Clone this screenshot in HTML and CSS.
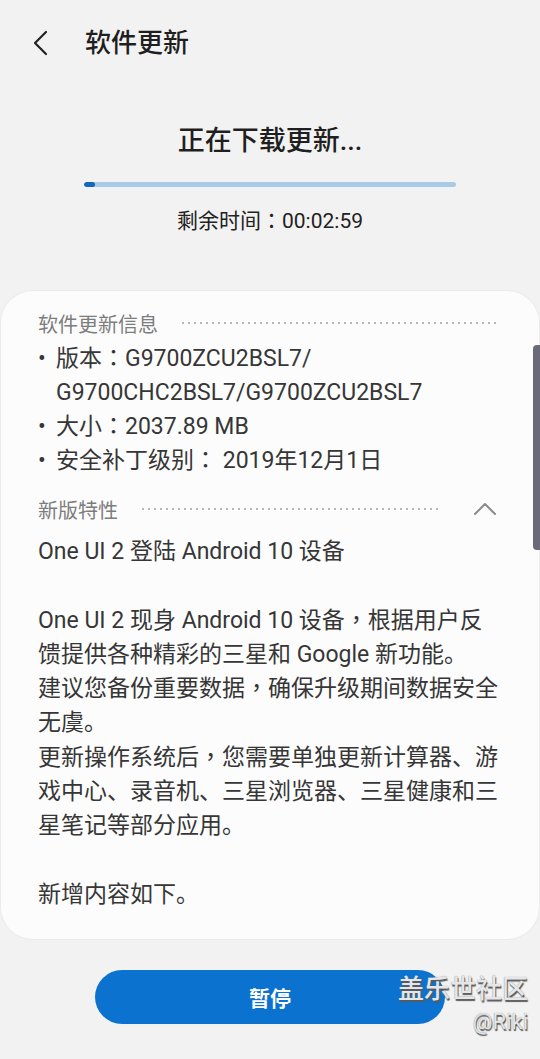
FILE: index.html
```html
<!DOCTYPE html>
<html lang="zh-CN">

<head>
    <meta charset="UTF-8">
    <meta name="viewport" content="width=device-width, initial-scale=1.0">
    <title>软件更新</title>
    <link rel="stylesheet" href="styles.css">
</head>

<body>
    <header class="topbar">
        <svg class="back" width="20" height="28" viewBox="0 0 20 28">
            <polyline points="14,3 3,14 14,25" fill="none" stroke="#222" stroke-width="2.2" stroke-linecap="round" stroke-linejoin="round"/>
        </svg>
        <h1 class="title">软件更新</h1>
    </header>

    <section class="status">
        <h2 class="status-title">正在下载更新...</h2>
        <div class="progress"><div class="progress-fill" style="width: 3%;"></div></div>
        <div class="remaining">剩余时间<span class="fw">：</span>00:02:59</div>
    </section>

    <main class="card">
        <div class="section-head">
            <span class="section-label">软件更新信息</span>
            <span class="dots"></span>
        </div>
        <ul class="info">
            <li><span class="bullet">•</span><span>版本<span class="fw">：</span>G9700ZCU2BSL7/<br>G9700CHC2BSL7/G9700ZCU2BSL7</span></li>
            <li><span class="bullet">•</span><span>大小<span class="fw">：</span>2037.89 MB</span></li>
            <li><span class="bullet">•</span><span>安全补丁级别<span class="fw">：</span> 2019年12月1日</span></li>
        </ul>

        <div class="section-head features">
            <span class="section-label">新版特性</span>
            <span class="dots"></span>
            <svg class="chevron" width="22" height="14" viewBox="0 0 22 14">
                <polyline points="1,12 11,2 21,12" fill="none" stroke="#8a8a8a" stroke-width="2" stroke-linecap="round" stroke-linejoin="round"/>
            </svg>
        </div>

        <p class="notes">One UI 2 登陆 Android 10 设备<br>
            <br>
            One UI 2 现身 Android 10 设备<span class="fw">，</span>根据用户反<br>
            馈提供各种精彩的三星和 Google 新功能。<br>
            建议您备份重要数据<span class="fw">，</span>确保升级期间数据安全<br>
            无虞。<br>
            更新操作系统后<span class="fw">，</span>您需要单独更新计算器、游<br>
            戏中心、录音机、三星浏览器、三星健康和三<br>
            星笔记等部分应用。<br>
            <br>
            新增内容如下。</p>
    </main>

    <div class="actions">
        <button class="pause">暂停</button>
    </div>

    <div class="scrollbar"></div>
    <div class="watermark">
        <div class="wm-name">盖乐世社区</div>
        <div class="wm-user">@Riki</div>
    </div>
</body>

</html>
```

FILE: styles.css
```css
body {
    margin: 0;
    padding: 0;
    background-color: #f2f2f2;
    color: #222;
    font-family: Roboto, "Noto Sans CJK SC", sans-serif;
    position: relative;
    min-height: 1059px;
}

/* centred full-width punctuation, as on the device */
.fw {
    font-family: "Noto Sans CJK TC", "Noto Sans CJK SC", sans-serif;
    font-feature-settings: "locl" 0;
    line-height: 0;
}

.topbar {
    height: 86px;
    display: flex;
    align-items: center;
    padding-left: 32px;
    box-sizing: border-box;
}

.back {
    display: block;
}

.title {
    margin: 0 0 0 33px;
    font-size: 26px;
    font-weight: 500;
    line-height: 36px;
    color: #1f1f1f;
}

.status {
    text-align: center;
}

.status-title {
    margin: 37px 0 0;
    font-size: 27px;
    font-weight: 500;
    line-height: 36px;
    color: #1f1f1f;
}

.progress {
    width: 372px;
    height: 5px;
    margin: 23px auto 0;
    background-color: #a9cae4;
    border-radius: 3px;
    overflow: hidden;
}

.progress-fill {
    height: 100%;
    background-color: #1467ba;
    border-radius: 3px;
}

.remaining {
    margin-top: 20px;
    font-size: 21px;
    line-height: 28px;
    color: #222;
}

.card {
    margin: 56px 1px 0;
    padding: 17px 40px 27px 37px;
    background-color: #fcfcfc;
    border-radius: 32px;
    box-shadow: 0 0 0 1px #ebebeb;
}

.section-head {
    display: flex;
    align-items: center;
    height: 30px;
}

.section-label {
    font-size: 20px;
    color: #7d7d7d;
}

.dots {
    flex: 1;
    height: 2px;
    margin-left: 24px;
    background-image: linear-gradient(to right, #b8b8b8 2px, transparent 2px);
    background-size: 6px 2px;
    background-repeat: repeat-x;
}

.features {
    margin-top: 16px;
}

.features .dots {
    margin-right: 36px;
}

.chevron {
    display: block;
    margin-right: 3px;
}

.info {
    list-style: none;
    margin: 4px 0 0;
    padding: 0;
    font-size: 23px;
    line-height: 34px;
    color: #363636;
}

.info li {
    display: flex;
}

.bullet {
    width: 18px;
    flex-shrink: 0;
}

.notes {
    margin: 11px 0 0;
    font-size: 23px;
    line-height: 34.3px;
    color: #363636;
    white-space: nowrap;
}

.actions {
    display: flex;
    justify-content: center;
    margin-top: 31px;
}

.pause {
    width: 350px;
    height: 54px;
    border: none;
    border-radius: 27px;
    background-color: #0b72cf;
    color: white;
    font-family: inherit;
    font-size: 21px;
    font-weight: bold;
}

/* overlays */
.scrollbar {
    position: absolute;
    top: 345px;
    right: 0;
    width: 7px;
    height: 205px;
    background-color: #6b6a78;
    border-radius: 4px 0 0 4px;
}

.watermark {
    position: absolute;
    top: 972px;
    right: 12px;
    text-align: right;
    color: #e4e6ea;
    text-shadow: 1px 2px 1px #5a5a5a, 0 0 1px #888;
}

.wm-name {
    font-size: 26px;
    font-weight: 500;
    line-height: 34px;
}

.wm-user {
    font-size: 22px;
    line-height: 28px;
    margin-top: 2px;
}
```
